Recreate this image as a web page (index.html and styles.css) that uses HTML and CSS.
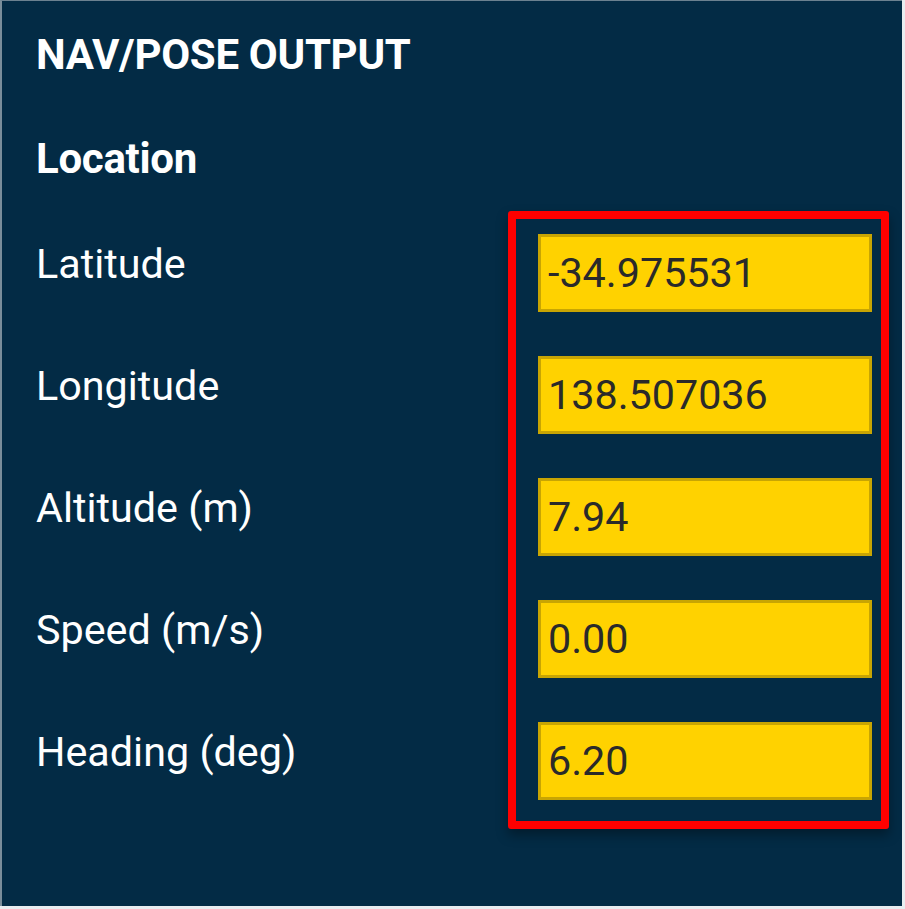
FILE: index.html
```html
<!DOCTYPE html>
<html lang="en">
<head>
<meta charset="utf-8">
<title>NAV/POSE OUTPUT</title>
<link rel="stylesheet" href="styles.css">
</head>
<body>
<div class="panel">
  <h1 class="title">NAV/POSE OUTPUT</h1>
  <h2 class="section">Location</h2>
  <div class="form">
    <div class="labels">
      <div class="label">Latitude</div>
      <div class="label">Longitude</div>
      <div class="label">Altitude (m)</div>
      <div class="label">Speed (m/s)</div>
      <div class="label">Heading (deg)</div>
    </div>
    <div class="highlight">
      <div class="value">-34.975531</div>
      <div class="value">138.507036</div>
      <div class="value">7.94</div>
      <div class="value">0.00</div>
      <div class="value">6.20</div>
    </div>
  </div>
</div>
</body>
</html>
```

FILE: styles.css
```css
html, body {
  margin: 0;
  padding: 0;
  background: #e9edf0;
}

body {
  width: 905px;
  height: 909px;
  overflow: hidden;
  font-family: Roboto, "Liberation Sans", sans-serif;
}

.panel {
  box-sizing: border-box;
  width: 902px;
  height: 906px;
  background: #032b45;
  border-top: 1px solid #6c8190;
  border-left: 2px solid #7a8d9a;
  padding: 29px 13px 0 34px;
  color: #ffffff;
}

.title {
  margin: 0;
  font-size: 42px;
  line-height: 50px;
  font-weight: 700;
  letter-spacing: -0.3px;
}

.section {
  margin: 54px 0 0 0;
  font-size: 42px;
  line-height: 50px;
  font-weight: 700;
  letter-spacing: -0.3px;
}

.form {
  display: flex;
  align-items: flex-start;
  margin-top: 27px;
}

.labels {
  flex: 1;
  display: flex;
  flex-direction: column;
  gap: 44px;
  padding-top: 23px;
}

.label {
  height: 78px;
  box-sizing: border-box;
  padding-top: 5px;
  font-size: 41.3px;
  line-height: 50px;
  font-weight: 400;
}

.highlight {
  width: 381px;
  box-sizing: border-box;
  border: 8px solid #ff0000;
  border-radius: 3px;
  padding: 15px 9px 21px 22px;
  display: flex;
  flex-direction: column;
  gap: 44px;
  box-shadow: 0 6px 12px rgba(0, 0, 0, 0.35);
}

.value {
  box-sizing: border-box;
  height: 78px;
  background: #ffd200;
  border: 3px solid #c8a503;
  padding-left: 7px;
  font-size: 41.3px;
  line-height: 72px;
  color: #2a2a2a;
}
```
